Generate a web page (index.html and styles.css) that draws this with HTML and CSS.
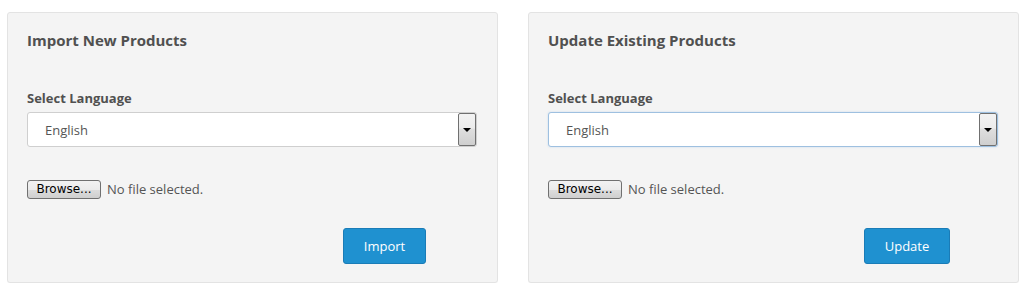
FILE: index.html
```html
<!DOCTYPE html>
<html lang="en">
<head>
  <meta charset="UTF-8" />
  <title>Import / Update Products</title>
  <link rel="stylesheet" href="styles.css">
</head>
<body>
  <div class="page">
    <div class="well">
      <h3 class="well-title">Import New Products</h3>
      <label class="field-label">Select Language</label>
      <div class="select">
        <span class="select-value">English</span>
        <span class="select-arrow"><span class="caret"></span></span>
      </div>
      <div class="file-row">
        <span class="browse-btn">Browse...</span>
        <span class="file-name">No file selected.</span>
      </div>
      <div class="actions">
        <button class="btn-primary">Import</button>
      </div>
    </div>

    <div class="well">
      <h3 class="well-title">Update Existing Products</h3>
      <label class="field-label">Select Language</label>
      <div class="select select-focus">
        <span class="select-value">English</span>
        <span class="select-arrow"><span class="caret"></span></span>
      </div>
      <div class="file-row">
        <span class="browse-btn">Browse...</span>
        <span class="file-name">No file selected.</span>
      </div>
      <div class="actions">
        <button class="btn-primary btn-update">Update</button>
      </div>
    </div>
  </div>
</body>
</html>
```

FILE: styles.css
```css
body {
  margin: 0;
  padding: 0;
  background-color: #fff;
  font-family: 'Open Sans', 'Noto Sans', sans-serif;
  font-size: 13px;
  color: #555;
}
.page {
  display: grid;
  grid-template-columns: 491px 491px;
  column-gap: 30px;
  padding: 12px 0 0 7px;
}
.well {
  background-color: #f4f4f4;
  border: 1px solid #e3e3e3;
  border-radius: 3px;
  padding: 16px 20px 19px 19px;
  height: 234px;
  box-shadow: 0 1px 1px rgba(0, 0, 0, 0.03);
}
.well-title {
  margin: 0 0 38px;
  font-size: 15px;
  font-weight: 700;
  line-height: 22px;
  color: #505050;
}
.field-label {
  display: block;
  font-weight: 700;
  font-size: 13px;
  line-height: 18px;
  color: #505050;
  margin-bottom: 5px;
}
.select {
  display: flex;
  align-items: stretch;
  height: 35px;
  box-sizing: border-box;
  border: 1px solid #cfcfcf;
  border-radius: 3px;
  background-color: #fff;
}
.select-focus {
  border-color: #9ec0e0;
  box-shadow: 0 0 2px rgba(102, 160, 220, 0.35);
}
.select-value {
  flex: 1;
  display: flex;
  align-items: center;
  padding-left: 17px;
  color: #555;
}
.select-arrow {
  width: 16px;
  border: 1px solid #707070;
  border-radius: 2px;
  background: linear-gradient(#f3f3f3 0%, #ececec 45%, #dedede 50%, #cfcfcf 100%);
  display: flex;
  align-items: center;
  justify-content: center;
}
.caret {
  width: 0;
  height: 0;
  border-left: 4px solid transparent;
  border-right: 4px solid transparent;
  border-top: 4px solid #000;
}
.file-row {
  display: flex;
  align-items: center;
  margin-top: 32px;
  height: 20px;
}
.browse-btn {
  display: inline-block;
  box-sizing: border-box;
  width: 74px;
  height: 19px;
  line-height: 17px;
  text-align: center;
  border: 1px solid #707070;
  border-radius: 3px;
  background: linear-gradient(#f2f2f2 0%, #ebebeb 50%, #dddddd 51%, #cfcfcf 100%);
  font-family: 'DejaVu Sans', 'Liberation Sans', sans-serif;
  font-size: 12px;
  color: #000;
}
.file-name {
  margin-left: 6px;
  color: #555;
}
.actions {
  margin-top: 29px;
  padding-left: 316px;
}
.btn-primary {
  width: 83px;
  height: 36px;
  border: 1px solid #1a7cb7;
  border-radius: 3px;
  background-color: #1f91d0;
  color: #fff;
  font-family: 'Open Sans', 'Noto Sans', sans-serif;
  font-size: 13px;
  cursor: pointer;
}
.btn-update {
  width: 86px;
}
```
